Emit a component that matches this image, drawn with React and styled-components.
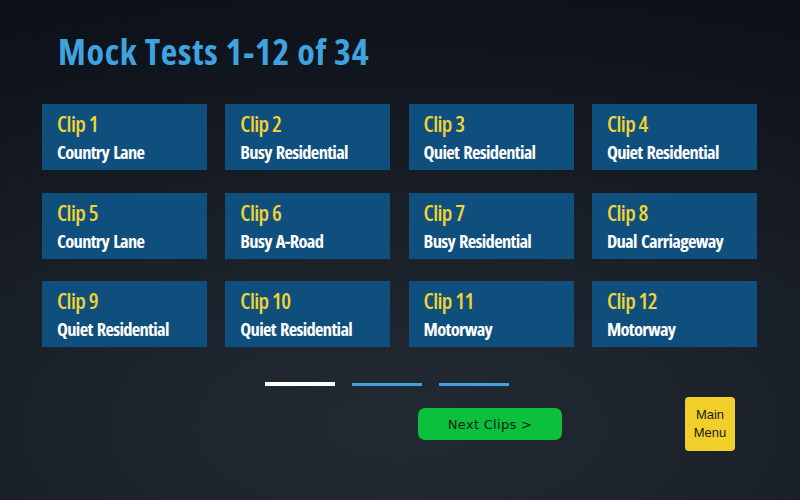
import React from 'react';
import styled, { createGlobalStyle } from 'styled-components';

const GlobalStyle = createGlobalStyle`
  html, body {
    margin: 0;
    padding: 0;
  }
  body {
    width: 800px;
    height: 500px;
    overflow: hidden;
    background: radial-gradient(ellipse 120% 90% at 50% 85%, #222a33 0%, #1a2028 45%, #0c1018 100%);
    font-family: "Open Sans", "DejaVu Sans Condensed", sans-serif;
  }
`;

const Screen = styled.div`
  width: 800px;
  height: 500px;
  box-sizing: border-box;
  padding: 32px 42px 0 42px;
  display: flex;
  flex-direction: column;
`;

const Title = styled.h1`
  margin: 0 0 0 16px;
  font-family: "Open Sans", sans-serif;
  font-weight: 700;
  font-size: 36px;
  line-height: 40px;
  color: #3ea3e0;
  font-stretch: 75%;
  letter-spacing: 0.7px;
  white-space: nowrap;
`;

const Grid = styled.div`
  margin-top: 32px;
  display: grid;
  grid-template-columns: repeat(4, 165px);
  column-gap: 18.3px;
  row-gap: 22.5px;
`;

const Tile = styled.div`
  height: 66px;
  background: #0f4f7e;
  box-sizing: border-box;
  padding: 6px 10px 0 15px;
  display: flex;
  flex-direction: column;
`;

const ClipName = styled.div`
  color: #f1d334;
  font-weight: 600;
  font-stretch: 75%;
  font-size: 22px;
  line-height: 26px;
  letter-spacing: -0.6px;
`;

const Road = styled.div`
  margin-top: 2px;
  color: #ffffff;
  font-weight: 700;
  font-stretch: 75%;
  font-size: 18.5px;
  line-height: 27px;
  letter-spacing: -0.7px;
  word-spacing: 1.5px;
  white-space: nowrap;
`;

const Pager = styled.div`
  margin-top: 35px;
  display: flex;
  justify-content: center;
  align-items: center;
  gap: 17px;
  padding-right: 26px;
`;

const Dot = styled.div`
  width: 70px;
  height: ${p => (p.$active ? 4 : 3)}px;
  background: ${p => (p.$active ? '#ffffff' : '#3ea3e0')};
`;

const Footer = styled.div`
  height: 70px;
  margin-top: 9px;
  display: flex;
  align-items: flex-start;
`;

const NextButton = styled.button`
  margin-left: 376px;
  margin-top: 13px;
  width: 144px;
  height: 32px;
  border: none;
  border-radius: 7px;
  background: #0cbf3c;
  color: #0c2412;
  font-family: "DejaVu Sans", sans-serif;
  font-size: 13px;
  letter-spacing: 0.3px;
  cursor: pointer;
`;

const MenuButton = styled.button`
  margin-left: 123px;
  margin-top: 2px;
  width: 50px;
  height: 54px;
  border: none;
  border-radius: 4px;
  background: #f0cf2b;
  color: #1d1a08;
  font-family: "Liberation Sans", Arial, sans-serif;
  font-size: 13px;
  line-height: 18px;
  padding: 0;
  cursor: pointer;
`;

const clips = [
  'Country Lane',
  'Busy Residential',
  'Quiet Residential',
  'Quiet Residential',
  'Country Lane',
  'Busy A-Road',
  'Busy Residential',
  'Dual Carriageway',
  'Quiet Residential',
  'Quiet Residential',
  'Motorway',
  'Motorway',
];

export default function App() {
  return (
    <>
      <GlobalStyle />
      <Screen>
        <Title>Mock Tests 1-12 of 34</Title>
        <Grid>
          {clips.map((road, i) => (
            <Tile key={i}>
              <ClipName>Clip {i + 1}</ClipName>
              <Road>{road}</Road>
            </Tile>
          ))}
        </Grid>
        <Pager>
          <Dot $active />
          <Dot />
          <Dot />
        </Pager>
        <Footer>
          <NextButton>Next Clips &gt;</NextButton>
          <MenuButton>
            Main
            <br />
            Menu
          </MenuButton>
        </Footer>
      </Screen>
    </>
  );
}
